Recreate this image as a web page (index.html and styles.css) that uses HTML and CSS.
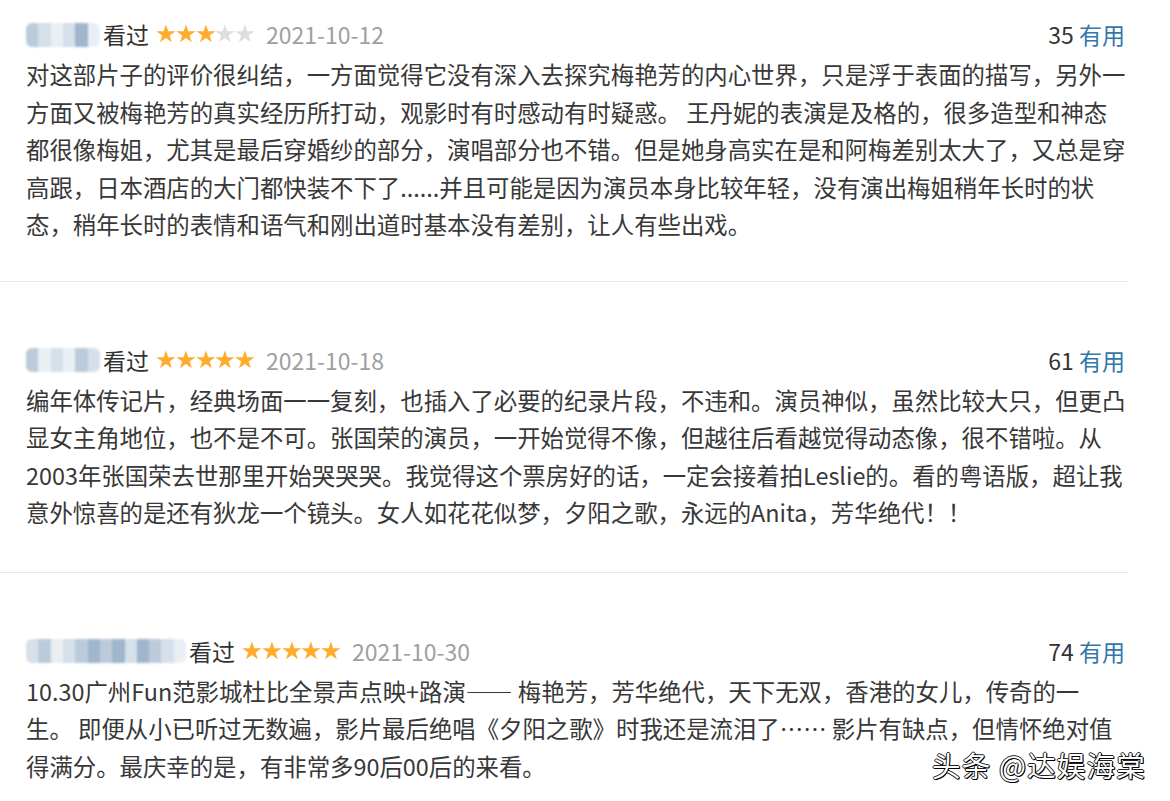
FILE: index.html
```html
<!DOCTYPE html>
<html lang="zh-CN">
<head>
<meta charset="utf-8">
<title>短评</title>
<link rel="stylesheet" href="styles.css">
</head>
<body>
<div class="list">
  <div class="review first">
    <div class="head">
      <div class="info">
        <span class="avatar-name w1">
          <i class="px c2"></i><i class="px c3"></i><i class="px c4"></i><i class="px c3"></i><i class="px c1"></i><i class="px c4"></i>
        </span>
        <span class="watched">看过</span>
        <span class="stars">
          <svg class="star on" viewBox="0 0 20 20"><path d="M10 0.4l2.35 6.9h7.3l-5.9 4.3 2.25 6.95L10 14.25l-6 4.3 2.25-6.95-5.9-4.3h7.3z"/></svg>
          <svg class="star on" viewBox="0 0 20 20"><path d="M10 0.4l2.35 6.9h7.3l-5.9 4.3 2.25 6.95L10 14.25l-6 4.3 2.25-6.95-5.9-4.3h7.3z"/></svg>
          <svg class="star on" viewBox="0 0 20 20"><path d="M10 0.4l2.35 6.9h7.3l-5.9 4.3 2.25 6.95L10 14.25l-6 4.3 2.25-6.95-5.9-4.3h7.3z"/></svg>
          <svg class="star off" viewBox="0 0 20 20"><path d="M10 0.4l2.35 6.9h7.3l-5.9 4.3 2.25 6.95L10 14.25l-6 4.3 2.25-6.95-5.9-4.3h7.3z"/></svg>
          <svg class="star off" viewBox="0 0 20 20"><path d="M10 0.4l2.35 6.9h7.3l-5.9 4.3 2.25 6.95L10 14.25l-6 4.3 2.25-6.95-5.9-4.3h7.3z"/></svg>
        </span>
        <span class="date">2021-10-12</span>
      </div>
      <div class="votes"><span class="count">35</span> <a class="useful">有用</a></div>
    </div>
    <p class="text">对这部片子的评价很纠结，一方面觉得它没有深入去探究梅艳芳的内心世界，只是浮于表面的描写，另外一<br>方面又被梅艳芳的真实经历所打动，观影时有时感动有时疑惑。 王丹妮的表演是及格的，很多造型和神态<br>都很像梅姐，尤其是最后穿婚纱的部分，演唱部分也不错。但是她身高实在是和阿梅差别太大了，又总是穿<br>高跟，日本酒店的大门都快装不下了......并且可能是因为演员本身比较年轻，没有演出梅姐稍年长时的状<br>态，稍年长时的表情和语气和刚出道时基本没有差别，让人有些出戏。</p>
  </div>

  <div class="review">
    <div class="head">
      <div class="info">
        <span class="avatar-name w1">
          <i class="px c2"></i><i class="px c4"></i><i class="px c3"></i><i class="px c4"></i><i class="px c2"></i><i class="px c3"></i>
        </span>
        <span class="watched">看过</span>
        <span class="stars">
          <svg class="star on" viewBox="0 0 20 20"><path d="M10 0.4l2.35 6.9h7.3l-5.9 4.3 2.25 6.95L10 14.25l-6 4.3 2.25-6.95-5.9-4.3h7.3z"/></svg>
          <svg class="star on" viewBox="0 0 20 20"><path d="M10 0.4l2.35 6.9h7.3l-5.9 4.3 2.25 6.95L10 14.25l-6 4.3 2.25-6.95-5.9-4.3h7.3z"/></svg>
          <svg class="star on" viewBox="0 0 20 20"><path d="M10 0.4l2.35 6.9h7.3l-5.9 4.3 2.25 6.95L10 14.25l-6 4.3 2.25-6.95-5.9-4.3h7.3z"/></svg>
          <svg class="star on" viewBox="0 0 20 20"><path d="M10 0.4l2.35 6.9h7.3l-5.9 4.3 2.25 6.95L10 14.25l-6 4.3 2.25-6.95-5.9-4.3h7.3z"/></svg>
          <svg class="star on" viewBox="0 0 20 20"><path d="M10 0.4l2.35 6.9h7.3l-5.9 4.3 2.25 6.95L10 14.25l-6 4.3 2.25-6.95-5.9-4.3h7.3z"/></svg>
        </span>
        <span class="date">2021-10-18</span>
      </div>
      <div class="votes"><span class="count">61</span> <a class="useful">有用</a></div>
    </div>
    <p class="text">编年体传记片，经典场面一一复刻，也插入了必要的纪录片段，不违和。演员神似，虽然比较大只，但更凸<br>显女主角地位，也不是不可。张国荣的演员，一开始觉得不像，但越往后看越觉得动态像，很不错啦。从<br>2003年张国荣去世那里开始哭哭哭。我觉得这个票房好的话，一定会接着拍Leslie的。看的粤语版，超让我<br>意外惊喜的是还有狄龙一个镜头。女人如花花似梦，夕阳之歌，永远的Anita，芳华绝代！！</p>
  </div>

  <div class="review last">
    <div class="head">
      <div class="info">
        <span class="avatar-name w2">
          <i class="px c3"></i><i class="px c2"></i><i class="px c4"></i><i class="px c3"></i><i class="px c2"></i><i class="px c1"></i><i class="px c2"></i><i class="px c1"></i><i class="px c3"></i><i class="px c1"></i><i class="px c2"></i><i class="px c3"></i><i class="px c4"></i>
        </span>
        <span class="watched">看过</span>
        <span class="stars">
          <svg class="star on" viewBox="0 0 20 20"><path d="M10 0.4l2.35 6.9h7.3l-5.9 4.3 2.25 6.95L10 14.25l-6 4.3 2.25-6.95-5.9-4.3h7.3z"/></svg>
          <svg class="star on" viewBox="0 0 20 20"><path d="M10 0.4l2.35 6.9h7.3l-5.9 4.3 2.25 6.95L10 14.25l-6 4.3 2.25-6.95-5.9-4.3h7.3z"/></svg>
          <svg class="star on" viewBox="0 0 20 20"><path d="M10 0.4l2.35 6.9h7.3l-5.9 4.3 2.25 6.95L10 14.25l-6 4.3 2.25-6.95-5.9-4.3h7.3z"/></svg>
          <svg class="star on" viewBox="0 0 20 20"><path d="M10 0.4l2.35 6.9h7.3l-5.9 4.3 2.25 6.95L10 14.25l-6 4.3 2.25-6.95-5.9-4.3h7.3z"/></svg>
          <svg class="star on" viewBox="0 0 20 20"><path d="M10 0.4l2.35 6.9h7.3l-5.9 4.3 2.25 6.95L10 14.25l-6 4.3 2.25-6.95-5.9-4.3h7.3z"/></svg>
        </span>
        <span class="date">2021-10-30</span>
      </div>
      <div class="votes"><span class="count">74</span> <a class="useful">有用</a></div>
    </div>
    <p class="text">10.30广州Fun范影城杜比全景声点映+路演—— 梅艳芳，芳华绝代，天下无双，香港的女儿，传奇的一<br>生。 即便从小已听过无数遍，影片最后绝唱《夕阳之歌》时我还是流泪了…… 影片有缺点，但情怀绝对值<br>得满分。最庆幸的是，有非常多90后00后的来看。</p>
  </div>
</div>
<div class="watermark">头条 @达娱海棠</div>
</body>
</html>
```

FILE: styles.css
```css
html, body {
  margin: 0;
  padding: 0;
  background: #ffffff;
}

body {
  font-family: "Noto Sans CJK SC", "Noto Sans", "Liberation Sans", sans-serif;
  color: #3d3d3d;
  width: 1170px;
  height: 801px;
  overflow: hidden;
  position: relative;
}

.list {
  width: 1128px;
}

.review {
  padding: 60px 3px 40px 26px;
  border-bottom: 1px solid #e8e8e8;
}

.review.first {
  padding-top: 16px;
  padding-bottom: 37px;
}

.review.last {
  border-bottom: none;
}

.head {
  display: flex;
  justify-content: space-between;
  align-items: center;
  height: 36px;
  font-size: 23px;
  line-height: 36px;
}

.info {
  display: flex;
  align-items: center;
}

.avatar-name {
  display: flex;
  height: 24px;
  border-radius: 6px;
  overflow: hidden;
  filter: blur(1px);
  margin-right: 2px;
  margin-top: 1px;
}

.avatar-name.w1 { width: 74px; }
.avatar-name.w2 { width: 160px; }

.px {
  flex: 1 1 0;
  height: 100%;
}

.px.c1 { background: #9fb6cd; }
.px.c2 { background: #bccbdb; }
.px.c3 { background: #d6e0ea; }
.px.c4 { background: #eaeff4; }

.watched {
  color: #333333;
  margin-left: 1px;
}

.stars {
  display: flex;
  margin-left: 7px;
}

.star {
  width: 19.8px;
  height: 19.8px;
}

.star.on { fill: #ffac2d; }
.star.off { fill: #dedede; }

.date {
  color: #a0a0a0;
  margin-left: 11px;
}

.votes {
  color: #333333;
}

.useful {
  color: #3377aa;
  text-decoration: none;
}

.text {
  margin: 4px 0 0;
  font-size: 23.4px;
  line-height: 37.5px;
  white-space: nowrap;
  color: #383838;
}

.watermark {
  position: absolute;
  left: 932px;
  top: 745px;
  font-size: 28.5px;
  line-height: 40px;
  color: #ffffff;
  letter-spacing: 1.2px;
  text-shadow:
    1px 1px 0 #000,
    -1px 0 0 #222,
    0 -1px 0 #222,
    1px 0 0 #000,
    0 1px 0 #000;
}
```
